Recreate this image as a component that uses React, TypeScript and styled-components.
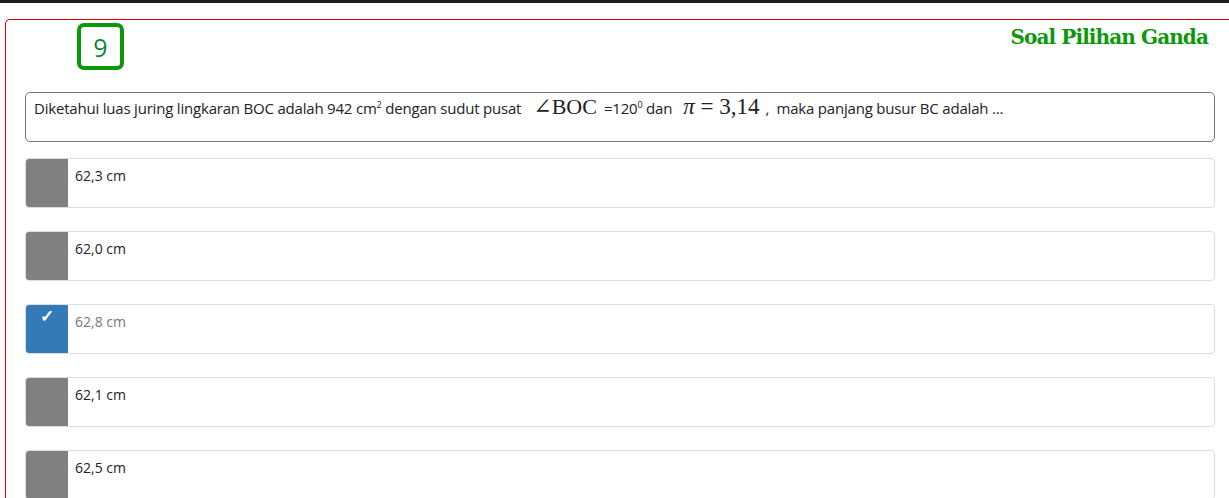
import React from "react";
import styled, { createGlobalStyle } from "styled-components";

const Global = createGlobalStyle`
  html, body { margin: 0; padding: 0; background: #fff; }
  body { font-family: "Open Sans", "Noto Sans", sans-serif; color: #222; overflow: hidden; }
`;

const TopBar = styled.div`
  height: 3px;
  background: #1e1e1e;
`;

const Page = styled.div`
  padding: 16px 0 0 5px;
`;

const Card = styled.div`
  border: 1px solid #e00000;
  border-right: none;
  border-radius: 5px 0 0 0;
  padding: 3px 0 0 19px;
  height: 500px;
`;

const Header = styled.div`
  display: flex;
  justify-content: space-between;
  align-items: flex-start;
  padding-right: 21px;
`;

const Badge = styled.div`
  margin-left: 52px;
  width: 39px;
  height: 39px;
  border: 4px solid #0a990a;
  border-radius: 7px;
  display: flex;
  align-items: center;
  justify-content: center;
  font-family: "Open Sans", sans-serif;
  font-size: 25px;
  color: #0a8a3a;
`;

const Title = styled.div`
  font-family: "DejaVu Serif", serif;
  font-weight: bold;
  font-size: 20px;
  color: #0a990a;
  margin-top: 2px;
  letter-spacing: -0.9px;
`;

const List = styled.div`
  margin-top: 22px;
  width: 1190px;
  display: flex;
  flex-direction: column;
  gap: 23px;
`;

const Question = styled.div`
  border: 1px solid #777;
  border-radius: 5px;
  height: 50px;
  padding: 5px 8px 0;
  box-sizing: border-box;
  font-size: 15px;
  letter-spacing: -0.2px;
  color: #222;
  line-height: 20px;
  margin-bottom: -7px;
`;

const Sup = styled.sup`
  font-size: 9px;
  line-height: 0;
`;

const MathText = styled.span<{ $size: number; $left: number; $right: number }>`
  font-family: "Liberation Serif", "DejaVu Serif", serif;
  font-size: ${(p) => p.$size}px;
  margin: 0 ${(p) => p.$right}px 0 ${(p) => p.$left}px;
  letter-spacing: 0;
  line-height: 0;
`;

const Option = styled.div`
  display: flex;
  height: 50px;
  border: 1px solid #ddd;
  border-radius: 4px;
  box-sizing: border-box;
  overflow: hidden;
`;

const Box = styled.div<{ $checked?: boolean }>`
  width: 42px;
  flex: none;
  background: ${(p) => (p.$checked ? "#337ab7" : "#808080")};
  color: #fff;
  display: flex;
  justify-content: center;
  padding-top: 1px;
  font-size: 17px;
  font-weight: bold;
  line-height: 20px;
`;

const OptText = styled.div<{ $checked?: boolean }>`
  padding: 7px 0 0 7px;
  font-size: 14px;
  line-height: 20px;
  color: ${(p) => (p.$checked ? "#777" : "#222")};
`;

const options = [
  { label: "62,3 cm" },
  { label: "62,0 cm" },
  { label: "62,8 cm", checked: true },
  { label: "62,1 cm" },
  { label: "62,5 cm" },
];

export default function App() {
  return (
    <>
      <Global />
      <TopBar />
      <Page>
        <Card>
          <Header>
            <Badge>9</Badge>
            <Title>Soal Pilihan Ganda</Title>
          </Header>
          <List>
            <Question>
              Diketahui luas juring lingkaran BOC adalah 942 cm<Sup>2</Sup> dengan sudut pusat
              <MathText $size={22} $left={12} $right={7}>∠BOC</MathText>=120<Sup>0</Sup> dan
              <MathText $size={23} $left={11} $right={6}>
                <i>π</i> = 3,14
              </MathText>
              , &nbsp;maka panjang busur BC adalah ...
            </Question>
            {options.map((o) => (
              <Option key={o.label}>
                <Box $checked={o.checked}>{o.checked ? "✓" : ""}</Box>
                <OptText $checked={o.checked}>{o.label}</OptText>
              </Option>
            ))}
          </List>
        </Card>
      </Page>
    </>
  );
}
